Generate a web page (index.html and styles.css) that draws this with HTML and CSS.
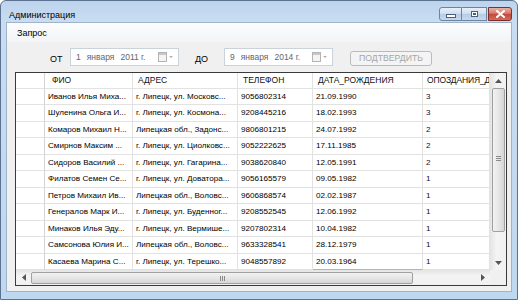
FILE: index.html
```html
<!DOCTYPE html>
<html lang="ru">
<head>
<meta charset="utf-8">
<title>Администрация</title>
<link rel="stylesheet" href="styles.css">
</head>
<body>
<div class="window">
  <div class="titlebar">
    <span class="title">Администрация</span>
    <div class="caption-buttons">
      <div class="cbtn min"><span class="min-icon"></span></div>
      <div class="cbtn max"><span class="max-icon"></span></div>
      <div class="cbtn close">
        <svg width="9" height="8" viewBox="0 0 9 8"><path d="M1 1 L8 7 M8 1 L1 7" stroke="#fff" stroke-width="2" stroke-linecap="square"/></svg>
      </div>
    </div>
  </div>
  <div class="client">
    <div class="menubar"><span class="menu-item">Запрос</span></div>
    <div class="filters">
      <span class="label label-from">ОТ</span>
      <div class="picker">
        <span class="p-day">1</span><span class="p-month">января</span><span class="p-year">2011 г.</span>
        <span class="p-icon">
          <svg width="15" height="10" viewBox="0 0 15 10"><rect x="0.5" y="0.5" width="8" height="9" fill="#f4f4f4" stroke="#b4b4b4"/><rect x="1" y="1" width="7" height="2" fill="#c8c8c8"/><path d="M11 4 L15 4 L13 6 Z" fill="#b0b0b0"/></svg>
        </span>
      </div>
      <span class="label label-to">ДО</span>
      <div class="picker">
        <span class="p-day">9</span><span class="p-month">января</span><span class="p-year">2014 г.</span>
        <span class="p-icon">
          <svg width="15" height="10" viewBox="0 0 15 10"><rect x="0.5" y="0.5" width="8" height="9" fill="#f4f4f4" stroke="#b4b4b4"/><rect x="1" y="1" width="7" height="2" fill="#c8c8c8"/><path d="M11 4 L15 4 L13 6 Z" fill="#b0b0b0"/></svg>
        </span>
      </div>
      <button class="confirm" disabled>ПОДТВЕРДИТЬ</button>
    </div>
    <div class="grid">
      <div class="grid-main">
        <div class="table">
          <div class="hc rh"></div><div class="hc hc-first">ФИО</div><div class="hc">АДРЕС</div><div class="hc">ТЕЛЕФОН</div><div class="hc">ДАТА_РОЖДЕНИЯ</div><div class="hc hc-last">ОПОЗДАНИЯ_Д</div>

          <div class="c rh"></div><div class="c">Иванов Илья Миха...</div><div class="c">г. Липецк, ул. Московс...</div><div class="c">9056802314</div><div class="c">21.09.1990</div><div class="c num">3</div>
          <div class="c rh"></div><div class="c">Шуленина Ольга И...</div><div class="c">г. Липецк, ул. Космона...</div><div class="c">9208445216</div><div class="c">18.02.1993</div><div class="c num">3</div>
          <div class="c rh"></div><div class="c">Комаров Михаил Н...</div><div class="c">Липецкая обл., Задонс...</div><div class="c">9806801215</div><div class="c">24.07.1992</div><div class="c num">2</div>
          <div class="c rh"></div><div class="c">Смирнов Максим ...</div><div class="c">г. Липецк, ул. Циолковс...</div><div class="c">9052222625</div><div class="c">17.11.1985</div><div class="c num">2</div>
          <div class="c rh"></div><div class="c">Сидоров Василий ...</div><div class="c">г. Липецк, ул. Гагарина...</div><div class="c">9038620840</div><div class="c">12.05.1991</div><div class="c num">2</div>
          <div class="c rh"></div><div class="c">Филатов Семен Се...</div><div class="c">г. Липецк, ул. Доватора...</div><div class="c">9056165579</div><div class="c">09.05.1982</div><div class="c num">1</div>
          <div class="c rh"></div><div class="c">Петров Михаил Ив...</div><div class="c">Липецкая обл., Воловс...</div><div class="c">9606868574</div><div class="c">02.02.1987</div><div class="c num">1</div>
          <div class="c rh"></div><div class="c">Генералов Марк И...</div><div class="c">г. Липецк, ул. Буденног...</div><div class="c">9208552545</div><div class="c">12.06.1992</div><div class="c num">1</div>
          <div class="c rh"></div><div class="c">Минаков Илья Эду...</div><div class="c">г. Липецк, ул. Вермише...</div><div class="c">9207802314</div><div class="c">10.04.1982</div><div class="c num">1</div>
          <div class="c rh"></div><div class="c">Самсонова Юлия И...</div><div class="c">Липецкая обл., Воловс...</div><div class="c">9633328541</div><div class="c">28.12.1979</div><div class="c num">1</div>
          <div class="c rh"></div><div class="c">Касаева Марина С...</div><div class="c">г. Липецк, ул. Терешко...</div><div class="c">9048557892</div><div class="c focus">20.03.1964</div><div class="c num">1</div>
        </div>
        <div class="vscroll">
          <div class="arrow-box"><svg width="7" height="4" viewBox="0 0 7 4"><path d="M0 4 L7 4 L3.5 0 Z" fill="#555"/></svg></div>
          <div class="vthumb"><span class="vgrip"></span></div>
          <div class="vtrack"></div>
          <div class="arrow-box"><svg width="7" height="4" viewBox="0 0 7 4"><path d="M0 0 L7 0 L3.5 4 Z" fill="#555"/></svg></div>
        </div>
      </div>
      <div class="grid-bottom">
        <div class="hscroll">
          <div class="harrow"><svg width="4" height="7" viewBox="0 0 4 7"><path d="M4 0 L4 7 L0 3.5 Z" fill="#555"/></svg></div>
          <div class="hthumb"><span class="hgrip"></span></div>
          <div class="htrack"></div>
          <div class="harrow"><svg width="4" height="7" viewBox="0 0 4 7"><path d="M0 0 L0 7 L4 3.5 Z" fill="#555"/></svg></div>
        </div>
        <div class="corner"></div>
      </div>
    </div>
  </div>
</div>
</body>
</html>
```

FILE: styles.css
```css
html, body {
  margin: 0;
  padding: 0;
}
body {
  width: 518px;
  height: 300px;
  overflow: hidden;
  font-family: "Liberation Sans", Arial, sans-serif;
  background: #ffffff;
}
.window {
  box-sizing: border-box;
  width: 518px;
  height: 300px;
  border: 1px solid #5b7290;
  border-radius: 6px 6px 0 0;
  background: linear-gradient(180deg, #bdd4ed 0, #c9dcf1 20px, #c4d9ef 60%, #bed8f0 100%);
  display: flex;
  flex-direction: column;
}
.titlebar {
  height: 21px;
  flex-shrink: 0;
  display: flex;
  align-items: flex-start;
}
.title {
  margin: 9px 0 0 8px;
  font-size: 9px;
  line-height: 11px;
  color: #000;
}
.caption-buttons {
  margin: 6px 5px 0 auto;
  display: flex;
}
.cbtn {
  box-sizing: border-box;
  height: 14px;
  border: 1px solid #6a84a4;
  background: linear-gradient(180deg, #e6eef8 0, #d2e0f0 45%, #b7cbe3 50%, #c8d9ed 100%);
  display: flex;
  align-items: center;
  justify-content: center;
}
.cbtn.min {
  width: 23px;
  border-radius: 3px 0 0 3px;
}
.cbtn.max {
  width: 25px;
  border-left: none;
}
.cbtn.close {
  width: 24px;
  margin-left: 1px;
  border-color: #7a3129;
  border-radius: 0 3px 3px 0;
  background: linear-gradient(180deg, #eab1a6 0, #d9776a 45%, #c4463a 50%, #d56a5a 100%);
}
.min-icon {
  display: block;
  width: 8px;
  height: 2px;
  margin-top: 3px;
  background: #fff;
  border: 1px solid #4a5f7a;
}
.max-icon {
  display: block;
  width: 5px;
  height: 4px;
  border: 1px solid #4a5f7a;
  box-shadow: inset 0 0 0 1px #fff;
  background: #4a5f7a;
}
.client {
  flex: 1;
  margin: 0 5px 7px 5px;
  border: 1px solid #9fb3cb;
  background: #f0f0f0;
  display: flex;
  flex-direction: column;
}
.menubar {
  height: 19px;
  flex-shrink: 0;
  padding-left: 10px;
  display: flex;
  align-items: center;
  background: linear-gradient(180deg, #fbfcfd, #f2f4f7);
  font-size: 9px;
  color: #000;
}
.filters {
  height: 18px;
  margin-top: 6px;
  padding-left: 43px;
  display: flex;
  align-items: center;
  font-size: 9px;
  white-space: nowrap;
}
.label {
  color: #000;
  padding-top: 3px;
}
.label-from {
  width: 20px;
}
.label-to {
  width: 29px;
  margin-left: 16px;
}
.picker {
  box-sizing: border-box;
  width: 109px;
  height: 18px;
  border: 1px solid #cad2dc;
  background: #fff;
  display: flex;
  align-items: center;
  padding-left: 5px;
  color: #666;
  font-size: 8.5px;
  white-space: nowrap;
}
.p-month {
  margin-left: 6px;
}
.p-year {
  margin-left: 6px;
}
.p-icon {
  margin-left: auto;
  margin-right: 5px;
  display: flex;
}
.confirm {
  box-sizing: border-box;
  align-self: flex-end;
  margin-left: 17px;
  width: 82px;
  height: 15px;
  padding: 0;
  border: 1px solid #b8bcc0;
  border-radius: 3px;
  background: #f4f4f4;
  color: #a6a6a6;
  font-family: "Liberation Sans", Arial, sans-serif;
  font-size: 8.7px;
  line-height: 13px;
}
.grid {
  box-sizing: border-box;
  width: 492px;
  height: 214px;
  margin: 6px 0 0 8px;
  border: 1px solid #3a3a3a;
  background: #fff;
  display: flex;
  flex-direction: column;
}
.grid-main {
  height: 197px;
  display: flex;
}
.table {
  width: 474px;
  display: grid;
  grid-template-columns: 29px 88px 105px 75px 110px 67px;
  grid-template-rows: 15.5px repeat(11, 16.5px);
  font-size: 8.1px;
  color: #000;
}
.hc, .c {
  box-sizing: border-box;
  border-right: 1px solid #e2e2e2;
  border-bottom: 1px solid #e2e2e2;
  white-space: nowrap;
  overflow: hidden;
  display: flex;
  align-items: center;
}
.hc {
  padding-left: 5px;
  color: #111;
  font-size: 8.5px;
}
.hc-first {
  padding-left: 7px;
}
.hc-last {
  padding-left: 4px;
  letter-spacing: -0.15px;
}
.c {
  padding-left: 3px;
}
.c.num {
  color: #200a30;
}
.rh {
  padding: 0;
  border-right-color: #d4d4d4;
}
.c.focus {
  border-bottom-color: #86bfea;
}
.vscroll {
  width: 16px;
  background: linear-gradient(90deg, #e4e4e4, #f4f4f4 40%, #f0f0f0);
  display: flex;
  flex-direction: column;
}
.arrow-box {
  height: 15px;
  flex-shrink: 0;
  display: flex;
  align-items: center;
  justify-content: center;
}
.vthumb {
  box-sizing: border-box;
  height: 144px;
  margin: 0 1px 0 2px;
  border: 1px solid #a0a0a0;
  border-radius: 2px;
  background: linear-gradient(90deg, #f2f2f2, #e6e6e6 50%, #d6d6d6);
  display: flex;
  align-items: center;
  justify-content: center;
}
.vgrip {
  display: block;
  width: 5px;
  height: 5px;
  margin-top: -4px;
  background: repeating-linear-gradient(180deg, #8a8a8a 0 1px, transparent 1px 2px);
}
.vtrack {
  flex: 1;
}
.grid-bottom {
  height: 15px;
  display: flex;
}
.hscroll {
  width: 474px;
  display: flex;
  background: linear-gradient(180deg, #e4e4e4, #f4f4f4 40%, #f0f0f0);
}
.harrow {
  width: 15px;
  flex-shrink: 0;
  display: flex;
  align-items: center;
  justify-content: center;
}
.hthumb {
  box-sizing: border-box;
  width: 382px;
  margin: 2px 0 1px 0;
  border: 1px solid #a0a0a0;
  border-radius: 2px;
  background: linear-gradient(180deg, #f2f2f2, #e6e6e6 50%, #d6d6d6);
  display: flex;
  align-items: center;
  justify-content: center;
}
.hgrip {
  display: block;
  width: 5px;
  height: 5px;
  background: repeating-linear-gradient(90deg, #8a8a8a 0 1px, transparent 1px 2px);
}
.htrack {
  flex: 1;
}
.corner {
  width: 16px;
  background: #f0f0f0;
}
```
